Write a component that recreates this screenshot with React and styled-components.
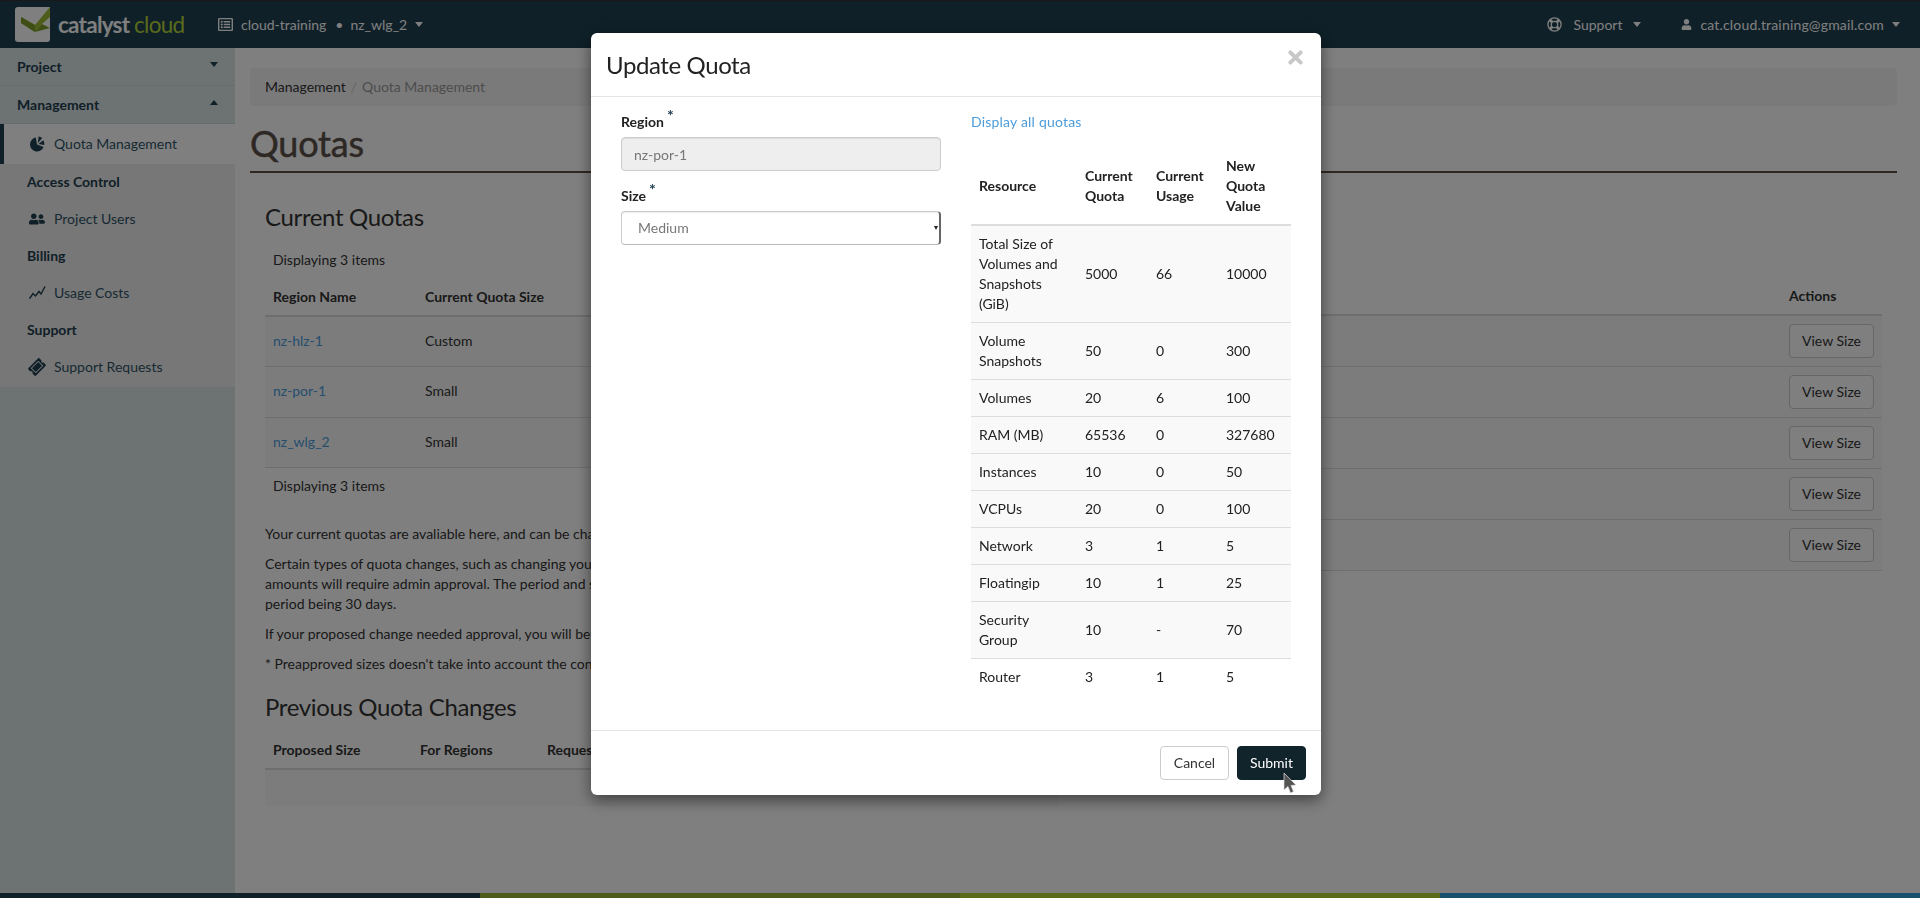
import React from 'react';
import styled, { createGlobalStyle } from 'styled-components';
import { FaRegListAlt, FaUser, FaUserFriends, FaTicketAlt, FaTimes } from 'react-icons/fa';

const regions = [
    { name: 'nz-hlz-1', size: 'Custom' },
    { name: 'nz-por-1', size: 'Small' },
    { name: 'nz_wlg_2', size: 'Small' },
];

const quotas = [
    ['Total Size of Volumes and Snapshots (GiB)', '5000', '66', '10000'],
    ['Volume Snapshots', '50', '0', '300'],
    ['Volumes', '20', '6', '100'],
    ['RAM (MB)', '65536', '0', '327680'],
    ['Instances', '10', '0', '50'],
    ['VCPUs', '20', '0', '100'],
    ['Network', '3', '1', '5'],
    ['Floatingip', '10', '1', '25'],
    ['Security Group', '10', '-', '70'],
    ['Router', '3', '1', '5'],
];

const Logo = () => (
    <LogoMark viewBox="0 0 35 35">
        <path d="M3 0 L35 0 L35 32 Q35 35 32 35 L3 35 Q0 35 0 32 L0 3 Q0 0 3 0 Z" fill="#fff" />
        <path d="M6 10 L20 18 L35 0 L35 10 L27 17 L20 25 L6 16 Z" fill="#9dbc34" />
        <path d="M6 10 L20 18 L20 25 L6 16 Z" fill="#7f9c28" />
        <path d="M27 17 L35 21 L20 25 Z" fill="#7f9c28" />
    </LogoMark>
);

const RingIcon = () => (
    <svg width="15" height="15" viewBox="0 0 15 15" fill="none" stroke="currentColor">
        <circle cx="7.5" cy="7.5" r="6.6" strokeWidth="1.3" />
        <circle cx="7.5" cy="7.5" r="3.2" strokeWidth="1.3" />
        <path d="M3 3 L5.2 5.2 M12 3 L9.8 5.2 M3 12 L5.2 9.8 M12 12 L9.8 9.8" strokeWidth="3" />
    </svg>
);

const PieIcon = () => (
    <svg width="17" height="17" viewBox="0 0 17 17" fill="currentColor">
        <path d="M8 8.5 L14.58 10.89 A7 7 0 1 1 6.78 1.61 Z" />
        <path d="M9 7 L9.57 .53 A6.5 6.5 0 0 1 13.18 2.02 Z" />
        <path d="M9.5 8 L14.23 4.31 A6 6 0 0 1 15.41 9.04 Z" />
    </svg>
);

const UsageIcon = () => (
    <svg width="17" height="14" viewBox="0 0 17 14" fill="none" stroke="currentColor" strokeWidth="1.4">
        <path d="M0.5 12.5 L4 7.5 L6.5 10 L10 5.5 L12 8 L16 0.5" />
    </svg>
);

const Cursor = () => (
    <CursorMark width="14" height="24" viewBox="0 0 14 24">
        <path d="M1 1 L1 18 L5 14.5 L7.5 21 L10.5 19.5 L8 13.5 L13 13 Z" fill="#555" stroke="#ddd" strokeWidth="0.7" />
    </CursorMark>
);

const App = () => {
    return (
        <Page>
            <GlobalStyle />
            <Navbar>
                <Brand>
                    <Logo />
                    <BrandText>catalyst <BrandCloud>cloud</BrandCloud></BrandText>
                </Brand>
                <NavScope>
                    <FaRegListAlt size={15} />
                    <NavText>cloud-training</NavText>
                    <NavDot>•</NavDot>
                    <NavText>nz_wlg_2</NavText>
                    <Caret />
                </NavScope>
                <NavRight>
                    <NavGroup>
                        <RingIcon />
                        <NavText>Support</NavText>
                        <Caret />
                    </NavGroup>
                    <NavGroup $tight>
                        <FaUser size={11} />
                        <EmailText>cat.cloud.training@gmail.com</EmailText>
                        <Caret />
                    </NavGroup>
                </NavRight>
            </Navbar>

            <Main>
                <Sidebar>
                    <Dashboard>Project<SideCaret /></Dashboard>
                    <Dashboard>Management<SideCaret $up /></Dashboard>
                    <Panel>
                        <SideItem $active><SideIcon><PieIcon /></SideIcon>Quota Management</SideItem>
                        <SideHeading>Access Control</SideHeading>
                        <SideItem><SideIcon><FaUserFriends size={16} /></SideIcon>Project Users</SideItem>
                        <SideHeading>Billing</SideHeading>
                        <SideItem><SideIcon><UsageIcon /></SideIcon>Usage Costs</SideItem>
                        <SideHeading>Support</SideHeading>
                        <SideItem><SideIcon><Ticket size={16} /></SideIcon>Support Requests</SideItem>
                    </Panel>
                </Sidebar>

                <Content>
                    <Breadcrumb>
                        <span>Management</span>
                        <CrumbSep>/</CrumbSep>
                        <CrumbActive>Quota Management</CrumbActive>
                    </Breadcrumb>
                    <PageTitle>Quotas</PageTitle>

                    <Section>
                        <SectionTitle>Current Quotas</SectionTitle>
                        <Columns>
                            <LeftColumn>
                                <TableNote>Displaying 3 items</TableNote>
                                <RegionTable>
                                    <thead>
                                        <tr>
                                            <RegionHead $width={152}>Region Name</RegionHead>
                                            <RegionHead>Current Quota Size</RegionHead>
                                        </tr>
                                    </thead>
                                    <tbody>
                                        {regions.map(r => (
                                            <tr key={r.name}>
                                                <RegionCell><RegionLink>{r.name}</RegionLink></RegionCell>
                                                <RegionCell>{r.size}</RegionCell>
                                            </tr>
                                        ))}
                                    </tbody>
                                </RegionTable>
                                <TableNote $after>Displaying 3 items</TableNote>

                                <Help>Your current quotas are avaliable here, and can be changed to suit your needs.</Help>
                                <Help>
                                    Certain types of quota changes, such as changing your quota to a larger size,<br />
                                    amounts will require admin approval. The period and size are limited,<br />
                                    period being 30 days.
                                </Help>
                                <Help>If your proposed change needed approval, you will be emailed.</Help>
                                <Help>* Preapproved sizes doesn't take into account the contents of your project.</Help>

                                <SectionTitle $previous>Previous Quota Changes</SectionTitle>
                                <ChangesHead>
                                    <ChangesLabel $width={147}>Proposed Size</ChangesLabel>
                                    <ChangesLabel $width={127}>For Regions</ChangesLabel>
                                    <ChangesLabel>Requested By</ChangesLabel>
                                </ChangesHead>
                                <ChangesEmpty />
                            </LeftColumn>

                            <ActionsColumn>
                                <ActionsHead>Actions</ActionsHead>
                                {[0, 1, 2, 3, 4].map(i => (
                                    <ActionRow key={i}><ViewButton>View Size</ViewButton></ActionRow>
                                ))}
                            </ActionsColumn>
                        </Columns>
                    </Section>
                </Content>
            </Main>

            <FooterBar>
                <FooterStrip $color="#1e4050" />
                <FooterStrip $color="#9dbc34" />
                <FooterStrip $color="#b6d638" />
                <FooterStrip $color="#32a0d6" />
            </FooterBar>

            <Backdrop />
            <Modal>
                <ModalHeader>
                    <ModalTitle>Update Quota</ModalTitle>
                    <Close><FaTimes size={21} /></Close>
                </ModalHeader>
                <ModalBody>
                    <FormColumn>
                        <Label>Region<Required>*</Required></Label>
                        <ReadOnlyInput value="nz-por-1" readOnly />
                        <Label>Size<Required>*</Required></Label>
                        <SelectWrap>
                            <SizeSelect defaultValue="Medium">
                                <option>Small</option>
                                <option>Medium</option>
                                <option>Large</option>
                            </SizeSelect>
                        </SelectWrap>
                    </FormColumn>
                    <QuotaColumn>
                        <DisplayAll>Display all quotas</DisplayAll>
                        <QuotaTable>
                            <thead>
                                <tr>
                                    <QuotaHead $width={106}>Resource</QuotaHead>
                                    <QuotaHead $width={71}>Current Quota</QuotaHead>
                                    <QuotaHead $width={70}>Current Usage</QuotaHead>
                                    <QuotaHead $width={73}>New Quota Value</QuotaHead>
                                </tr>
                            </thead>
                            <tbody>
                                {quotas.map(row => (
                                    <QuotaRow key={row[0]}>
                                        {row.map((cell, i) => <QuotaCell key={i}>{cell}</QuotaCell>)}
                                    </QuotaRow>
                                ))}
                            </tbody>
                        </QuotaTable>
                    </QuotaColumn>
                </ModalBody>
                <ModalFooter>
                    <CancelButton>Cancel</CancelButton>
                    <SubmitButton>Submit</SubmitButton>
                </ModalFooter>
                <Cursor />
            </Modal>
        </Page>
    );
};

export default App;


// STYLES ------------------------

const GlobalStyle = createGlobalStyle`
    * {
        box-sizing: border-box;
    }

    html, body {
        margin: 0;
        height: 100%;
        overflow: hidden;
        background: #fff;
        color: #333;
        font-family: Lato, "Liberation Sans", sans-serif;
        font-size: 14px;
        line-height: 20px;
    }
`

const Page = styled.div`
    display: flex;
    flex-direction: column;
    height: 898px;
    overflow: hidden;
`

const Navbar = styled.header`
    display: flex;
    align-items: center;
    flex: 0 0 48px;
    border-top: 1px solid #333;
    padding-right: 20px;
    background: #1e4050;
    color: #fff;
`

const Brand = styled.div`
    display: flex;
    align-items: center;
    width: 218px;
    padding-left: 15px;
`

const LogoMark = styled.svg`
    width: 35px;
    height: 35px;
    flex: none;
`

const BrandText = styled.span`
    margin-left: 8px;
    font-size: 22.5px;
    font-weight: 700;
    letter-spacing: -0.75px;
    white-space: nowrap;
`

const BrandCloud = styled.span`
    font-weight: 400;
    color: #b4d638;
`

const NavScope = styled.div`
    display: flex;
    align-items: center;
    gap: 8px;
`

const NavText = styled.span`
    white-space: nowrap;
`

const EmailText = styled(NavText)`
    letter-spacing: 0.17px;
`

const NavDot = styled.span`
    margin: 0 -1px 0 1px;
`

const NavRight = styled.div`
    display: flex;
    align-items: center;
    gap: 40px;
    margin-left: auto;
`

const NavGroup = styled.div`
    display: flex;
    align-items: center;
    gap: ${props => props.$tight ? '8px' : '11px'};
`

const Caret = styled.i`
    width: 0;
    height: 0;
    border-top: 5px solid #fff;
    border-left: 4px solid transparent;
    border-right: 4px solid transparent;
`

const Main = styled.div`
    display: flex;
    flex: 1;
    min-height: 0;
`

const Sidebar = styled.nav`
    flex: 0 0 235px;
    background: #dae4e6;
`

const Dashboard = styled.div`
    display: flex;
    align-items: center;
    justify-content: space-between;
    height: 38px;
    padding: 0 17px;
    border-bottom: 1px solid #cfd9db;
    font-weight: 700;
    color: #1e4050;
`

const SideCaret = styled.i`
    width: 0;
    height: 0;
    margin-top: -4px;
    border-left: 4px solid transparent;
    border-right: 4px solid transparent;
    border-top: ${props => props.$up ? '0' : '5px solid #1e4050'};
    border-bottom: ${props => props.$up ? '5px solid #1e4050' : '0'};
`

const Panel = styled.div`
    padding-bottom: 1px;
    background: #eee;
`

const SideItem = styled.div`
    display: flex;
    align-items: center;
    height: ${props => props.$active ? '40px' : '39px'};
    padding-left: ${props => props.$active ? '25px' : '29px'};
    border-left: ${props => props.$active ? '4px solid #1e4050' : '0'};
    background: ${props => props.$active ? '#fff' : 'transparent'};
    color: #2f5468;
`

const SideIcon = styled.span`
    display: flex;
    justify-content: flex-start;
    width: 25px;
    color: #1e4050;
`

const Ticket = styled(FaTicketAlt)`
    transform: rotate(-45deg);
`

const SideHeading = styled.div`
    display: flex;
    align-items: center;
    height: 35px;
    padding-left: 27px;
    font-weight: 700;
    color: #1e4050;
`

const Content = styled.main`
    flex: 1;
    min-width: 0;
    padding: 20px 23px 0 15px;
`

const Breadcrumb = styled.div`
    display: flex;
    align-items: center;
    height: 38px;
    padding: 0 15px;
    border-radius: 4px;
    background: #f5f5f5;
`

const CrumbSep = styled.span`
    padding: 0 5px;
    color: #ccc;
`

const CrumbActive = styled.span`
    color: #999;
`

const PageTitle = styled.h1`
    margin: 17px 0 0;
    padding-bottom: 8px;
    border-bottom: 2px solid #5c5148;
    color: #5c5148;
    font-size: 36px;
    font-weight: 400;
    line-height: 40px;
    letter-spacing: -0.2px;
    -webkit-text-stroke: 0.5px #5c5148;
`

const Section = styled.section`
    padding: 31px 15px 0;
`

const SectionTitle = styled.h3`
    margin: ${props => props.$previous ? '20px 0 12px' : '0 0 12px'};
    color: #333;
    font-size: 24px;
    font-weight: 400;
    line-height: 26px;
    letter-spacing: -0.35px;
`

const Columns = styled.div`
    display: flex;
`

const LeftColumn = styled.div`
    flex: 0 0 793px;
    overflow: hidden;
`

const TableNote = styled.div`
    height: 36px;
    margin-bottom: ${props => props.$after ? '20px' : '0'};
    padding: 8px;
`

const RegionTable = styled.table`
    width: 100%;
    border-collapse: collapse;
    table-layout: fixed;
`

const RegionHead = styled.th`
    width: ${props => props.$width ? `${props.$width}px` : 'auto'};
    height: 38px;
    padding: 8px;
    border-bottom: 2px solid #ddd;
    text-align: left;
    font-weight: 700;
`

const RegionCell = styled.td`
    height: 50.67px;
    padding: 6px 8px 8px;
    border-bottom: 1px solid #ddd;
    background: #f9f9f9;
`

const RegionLink = styled.a`
    color: #4c9cdb;
`

const Help = styled.p`
    margin: 0 0 10px;
    white-space: nowrap;
`

const ChangesHead = styled.div`
    display: flex;
    height: 38px;
    padding: 8px;
    border-bottom: 2px solid #ddd;
`

const ChangesLabel = styled.div`
    flex: ${props => props.$width ? `0 0 ${props.$width}px` : '1'};
    font-weight: 700;
`

const ChangesEmpty = styled.div`
    height: 36px;
    background: #f9f9f9;
`

const ActionsColumn = styled.div`
    flex: 1;
    padding-top: 36px;
`

const ActionsHead = styled.div`
    height: 38px;
    padding: 8px 0 8px 731px;
    border-bottom: 2px solid #ddd;
    font-weight: 700;
`

const ActionRow = styled.div`
    display: flex;
    justify-content: flex-end;
    height: 51px;
    padding: 8px;
    border-bottom: 1px solid #ddd;
    background: #f9f9f9;
`

const ViewButton = styled.button`
    width: 85px;
    height: 34px;
    padding: 0;
    border: 1px solid #ccc;
    border-radius: 4px;
    background: #fff;
    color: #333;
    font: inherit;
`

const FooterBar = styled.footer`
    display: flex;
    flex: 0 0 5px;
`

const FooterStrip = styled.div`
    flex: 1;
    background: ${props => props.$color};
`

const Backdrop = styled.div`
    position: fixed;
    inset: 0;
    background: rgba(0, 0, 0, 0.5);
`

const Modal = styled.div`
    position: fixed;
    top: 33px;
    left: 591px;
    display: flex;
    flex-direction: column;
    width: 730px;
    height: 762px;
    border-radius: 6px;
    background: #fff;
    box-shadow: 0 5px 15px rgba(0, 0, 0, 0.5);
`

const ModalHeader = styled.div`
    display: flex;
    align-items: flex-start;
    justify-content: space-between;
    flex: 0 0 64px;
    padding: 18px 15px 0;
    border-bottom: 1px solid #e5e5e5;
`

const ModalTitle = styled.h4`
    margin: 0;
    color: #222;
    font-size: 24px;
    font-weight: 400;
    line-height: 27px;
    letter-spacing: -0.4px;
`

const Close = styled.span`
    display: flex;
    margin-top: -4px;
    color: #c8c8c8;
`

const ModalBody = styled.div`
    display: flex;
    flex: 1;
    gap: 30px;
    padding: 15px 30px;
`

const FormColumn = styled.div`
    flex: 0 0 320px;
`

const Label = styled.label`
    display: block;
    height: 20px;
    margin-bottom: 5px;
    color: #222;
    font-weight: 700;
`

const Required = styled.sup`
    margin-left: 3px;
    color: #1e4050;
    font-size: 16px;
    font-weight: 700;
    line-height: 0;
`

const ReadOnlyInput = styled.input`
    display: block;
    width: 100%;
    height: 34px;
    margin-bottom: 15px;
    padding: 6px 12px;
    border: 1px solid #ccc;
    border-radius: 4px;
    background: #eee;
    box-shadow: inset 0 1px 1px rgba(0, 0, 0, 0.075);
    color: #777;
    font: inherit;
`

const SelectWrap = styled.div`
    position: relative;

    &::after {
        content: "";
        position: absolute;
        top: 15px;
        right: 3px;
        border-top: 4px solid #222;
        border-left: 2px solid transparent;
        border-right: 2px solid transparent;
    }
`

const SizeSelect = styled.select`
    display: block;
    width: 100%;
    height: 34px;
    padding: 6px 12px 6px 16px;
    border: 1px solid #ccc;
    border-right: 2px solid #666;
    border-bottom-color: #bbb;
    border-radius: 4px;
    background: #fff;
    box-shadow: inset 0 1px 1px rgba(0, 0, 0, 0.075);
    color: #777;
    font: inherit;
    appearance: none;
`

const QuotaColumn = styled.div`
    flex: 0 0 320px;
`

const DisplayAll = styled.a`
    display: block;
    height: 20px;
    margin-bottom: 16px;
    color: #4c9cdb;
    letter-spacing: 0.2px;
`

const QuotaTable = styled.table`
    width: 320px;
    border-collapse: collapse;
    table-layout: fixed;
`

const QuotaHead = styled.th`
    width: ${props => props.$width}px;
    padding: 8px;
    border-bottom: 2px solid #ddd;
    text-align: left;
    color: #222;
    font-weight: 700;
`

const QuotaRow = styled.tr`
    background: #f9f9f9;
    border-bottom: 1px solid #ddd;

    &:last-child {
        background: #fff;
        border-bottom: 0;
    }
`

const QuotaCell = styled.td`
    padding: 8px;
    color: #222;
`

const ModalFooter = styled.div`
    display: flex;
    justify-content: flex-end;
    gap: 8px;
    flex: 0 0 65px;
    padding: 15px;
    border-top: 1px solid #e5e5e5;
`

const CancelButton = styled.button`
    width: 69px;
    height: 34px;
    padding: 0;
    border: 1px solid #ccc;
    border-radius: 4px;
    background: #fff;
    color: #333;
    font: inherit;
`

const SubmitButton = styled(CancelButton)`
    border-color: #11232b;
    background: #11232b;
    color: #fff;
`

const CursorMark = styled.svg`
    position: absolute;
    left: 692px;
    top: 739px;
`
